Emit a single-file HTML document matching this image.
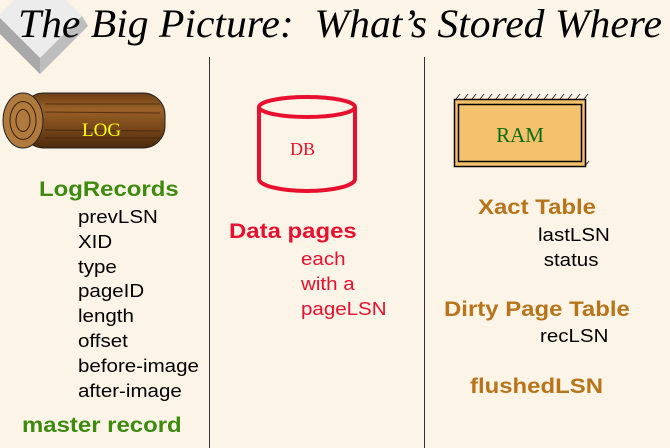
<!DOCTYPE html>
<html><head><meta charset="utf-8"><style>
body{margin:0;width:670px;height:448px;background:#fdf4e8;position:relative;overflow:hidden;font-family:"Liberation Sans",sans-serif}
.a{position:absolute;white-space:nowrap;transform-origin:0 0}
.s{transform:scaleX(1.14)}
.t{font-family:"Liberation Serif",serif;font-style:italic;font-size:40px;top:0px;left:18px;color:#000;transform:scaleX(1.04)}
.g{color:#3d8a0f;font-weight:bold;font-size:21px}
.k{color:#000;font-size:18px;line-height:24.8px}
.r{color:#e8102e}
.o{color:#b8741a;font-weight:bold;font-size:21px}
.v{position:absolute;width:1px;background:#333;top:57px;height:391px}
</style></head><body>
<svg class="a" style="left:0;top:0" width="90" height="90">
<polygon points="40,-22 88,26 40,74 -8,26" fill="#c8c8c8"/>
<polygon points="40,-26 82,16 40,58 -2,16" fill="#ececec"/>
<polygon points="-2,16 40,58 40,74 -8,26" fill="#a9a9a9"/>
<polygon points="40,58 82,16 88,26 40,74" fill="#bdbdbd"/>
</svg>
<div class="a t">The Big Picture:&nbsp; What’s Stored Where</div>
<div class="v" style="left:209px"></div>
<div class="v" style="left:424px"></div>
<svg class="a" style="left:0;top:90px" width="170" height="62">
<defs><linearGradient id="w" x1="0" y1="0" x2="0" y2="1"><stop offset="0" stop-color="#6b3f14"/><stop offset=".3" stop-color="#9a6128"/><stop offset=".6" stop-color="#7d4a1c"/><stop offset="1" stop-color="#4a2a0c"/></linearGradient></defs>
<rect x="22" y="3" width="143" height="55" rx="22" fill="url(#w)" stroke="#222"/>
<g stroke="#3b2008" stroke-width="1" opacity=".7"><line x1="45" y1="14" x2="160" y2="14"/><line x1="45" y1="22" x2="160" y2="23"/><line x1="45" y1="40" x2="160" y2="41"/><line x1="45" y1="48" x2="160" y2="48"/></g>
<ellipse cx="23" cy="30.5" rx="20" ry="27.5" fill="#b07a3e" stroke="#222"/>
<ellipse cx="23" cy="30.5" rx="13" ry="19" fill="none" stroke="#3b2008"/>
<ellipse cx="23" cy="30.5" rx="7" ry="11" fill="none" stroke="#3b2008"/>
<text x="82" y="46" font-family="Liberation Serif,serif" font-size="19" fill="#ffff00">LOG</text>
</svg>
<div class="a g s" style="left:39px;top:178px">LogRecords</div>
<div class="a k s" style="left:78px;top:205px">prevLSN<br>XID<br>type<br>pageID<br>length<br>offset<br>before-image<br>after-image</div>
<div class="a g s" style="left:22px;top:414px">master record</div>
<svg class="a" style="left:255px;top:95px" width="104" height="102">
<path d="M4,12 V84 A48,12 0 0 0 100,84 V12" fill="none" stroke="#e8102e" stroke-width="4"/>
<ellipse cx="52" cy="12" rx="48" ry="10" fill="none" stroke="#e8102e" stroke-width="4"/>
<text x="35" y="60" font-family="Liberation Serif,serif" font-size="18" fill="#e8102e">DB</text>
</svg>
<div class="a r s" style="left:229px;top:220px;font-weight:bold;font-size:21px">Data pages</div>
<div class="a r s" style="left:301px;top:247px;font-size:18px;line-height:24.8px">each<br>with a<br>pageLSN</div>
<svg class="a" style="left:450px;top:90px" width="145" height="82">
<g stroke="#333" stroke-width="1"><path d="M6,9 l4,-5 M14,9 l4,-5 M22,9 l4,-5 M30,9 l4,-5 M38,9 l4,-5 M46,9 l4,-5 M54,9 l4,-5 M62,9 l4,-5 M70,9 l4,-5 M78,9 l4,-5 M86,9 l4,-5 M94,9 l4,-5 M102,9 l4,-5 M110,9 l4,-5 M118,9 l4,-5 M126,9 l4,-5 M134,9 l4,-5 M135,76 l4,-5"/></g>
<rect x="4.5" y="9.5" width="131" height="67" fill="#f4c16c" stroke="#000" stroke-width="1.5"/>
<rect x="8.5" y="14.5" width="123" height="57" fill="none" stroke="#000" stroke-width="1.5"/>
<text x="70" y="52" text-anchor="middle" font-family="Liberation Serif,serif" font-size="21" fill="#0d6b12">RAM</text>
</svg>
<div class="a o s" style="left:478px;top:196px">Xact Table</div>
<div class="a k s" style="left:538px;top:223px">lastLSN<br>&nbsp;status</div>
<div class="a o s" style="left:444px;top:298px">Dirty Page Table</div>
<div class="a k s" style="left:540px;top:324px">recLSN</div>
<div class="a o s" style="left:470px;top:375px">flushedLSN</div>
</body></html>
